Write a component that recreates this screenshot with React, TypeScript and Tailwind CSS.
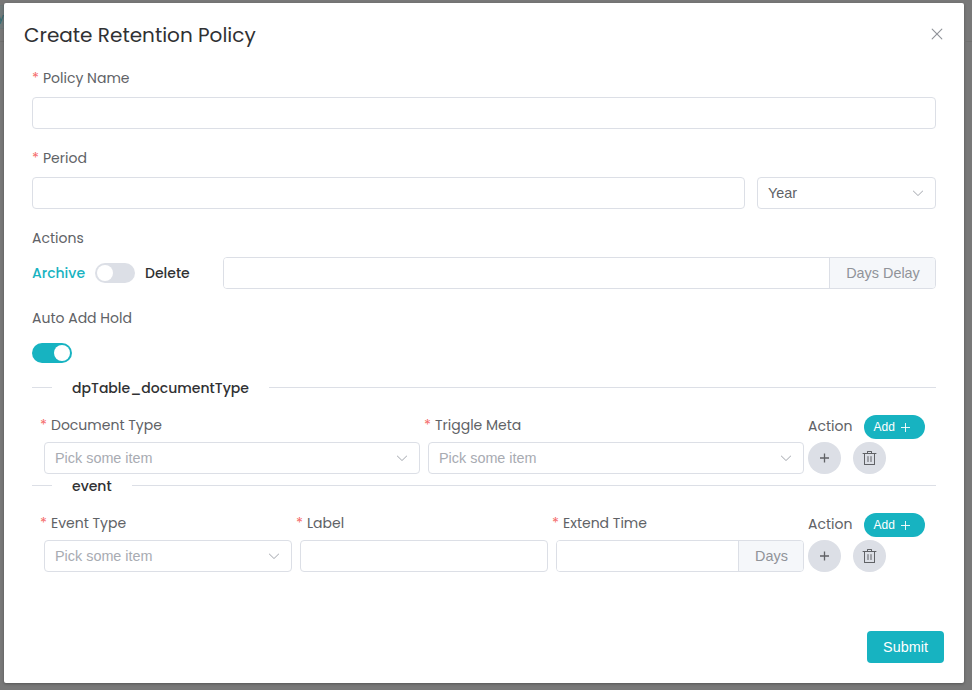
import type { ReactNode } from "react";

const paths = {
  arrowDown:
    "M831.872 340.864 512 652.672 192.128 340.864a30.592 30.592 0 0 0-42.752 0 29.12 29.12 0 0 0 0 41.6L489.664 714.24a32 32 0 0 0 44.672 0l340.288-331.712a29.12 29.12 0 0 0 0-41.728 30.592 30.592 0 0 0-42.752 0z",
  close:
    "M764.288 214.592 512 466.88 259.712 214.592a31.936 31.936 0 0 0-45.12 45.12L466.752 512 214.528 764.224a31.936 31.936 0 1 0 45.12 45.184L512 557.184l252.288 252.288a31.936 31.936 0 0 0 45.12-45.12L557.12 512.064l252.288-252.352a31.936 31.936 0 1 0-45.12-45.184z",
  trash:
    "M160 256H96a32 32 0 0 1 0-64h256V95.936a32 32 0 0 1 32-32h256a32 32 0 0 1 32 32V192h256a32 32 0 1 1 0 64h-64v672a32 32 0 0 1-32 32H192a32 32 0 0 1-32-32zm448-64v-64H416v64zM224 896h576V256H224zm192-128a32 32 0 0 1-32-32V416a32 32 0 0 1 64 0v320a32 32 0 0 1-32 32m192 0a32 32 0 0 1-32-32V416a32 32 0 0 1 64 0v320a32 32 0 0 1-32 32",
};

function Icon({ name, className }: { name: keyof typeof paths; className: string }) {
  return (
    <svg viewBox="0 0 1024 1024" className={className} fill="currentColor">
      <path d={paths[name]} />
    </svg>
  );
}

function Plus({ className, weight }: { className: string; weight: number }) {
  return (
    <svg viewBox="0 0 9 9" className={className} fill="none" stroke="currentColor" strokeWidth={weight}>
      <path d="M0 4.5H9M4.5 0V9" />
    </svg>
  );
}

function Label({ children, required, className = "" }: { children: ReactNode; required?: boolean; className?: string }) {
  return (
    <div className={`flex h-5 items-center whitespace-nowrap text-[14px] leading-5 text-[#606266] ${className}`}>
      {required && <span className="w-[11px] text-[14.4px] text-[#f56c6c]">*</span>}
      <span>{children}</span>
    </div>
  );
}

function Input({ className = "" }: { className?: string }) {
  return <input className={`block h-8 rounded border border-[#dcdfe6] bg-white px-2.5 outline-none ${className}`} />;
}

function Select({ text, muted, className = "" }: { text: string; muted?: boolean; className?: string }) {
  return (
    <div
      className={`flex h-8 items-center justify-between rounded border border-[#dcdfe6] bg-white px-2.5 font-['Liberation_Sans',sans-serif] text-[14.4px] ${muted ? "text-[#a8abb2]" : "text-[#606266]"} ${className}`}
    >
      <span className="leading-5">{text}</span>
      <Icon name="arrowDown" className="size-3.5 text-[#a8abb2]" />
    </div>
  );
}

function InputWithUnit({ unit, className, unitClass }: { unit: string; className: string; unitClass: string }) {
  return (
    <div className={`flex h-8 overflow-hidden rounded border border-[#dcdfe6] ${className}`}>
      <input className="min-w-0 flex-1 bg-white px-2.5 outline-none" />
      <div
        className={`flex items-center justify-center border-l border-[#dcdfe6] bg-[#f5f7fa] pl-px font-['Liberation_Sans',sans-serif] text-[14.4px] leading-5 font-normal text-[#909399] ${unitClass}`}
      >
        {unit}
      </div>
    </div>
  );
}

function Divider({ children }: { children: ReactNode }) {
  return (
    <div className="flex h-5 items-center text-[14px] font-medium text-[#303133]">
      <span className="mb-[2px] h-px w-5 bg-[#dcdfe6]" />
      <span className="px-5 leading-5">{children}</span>
      <span className="mb-[2px] h-px flex-1 bg-[#dcdfe6]" />
    </div>
  );
}

function ActionColumn() {
  return (
    <div className="ml-1 w-[128px]">
      <div className="flex h-6 items-center">
        <Label className="mb-[2px] w-14">Action</Label>
        <button className="flex h-6 w-[61px] items-center rounded-full bg-[#17b3c1] pl-[9.6px] font-['Liberation_Sans',sans-serif] text-[12px] text-white">
          Add
          <Plus className="ml-[6.4px] size-[9px]" weight={0.9} />
        </button>
      </div>
      <div className="mt-[3px] flex gap-3">
        <button className="flex h-8 w-[33px] items-center justify-center rounded-full bg-[#dcdfe6] text-[#606266]">
          <Plus className="h-[10px] w-[9px]" weight={1.3} />
        </button>
        <button className="flex h-8 w-[33px] items-center justify-center rounded-full bg-[#dcdfe6] text-[#606266]">
          <Icon name="trash" className="h-4 w-[17px]" />
        </button>
      </div>
    </div>
  );
}

function Field({ label, children }: { label: string; children: ReactNode }) {
  return (
    <div>
      <Label required className="-ml-[4px] mb-[7px]">
        {label}
      </Label>
      {children}
    </div>
  );
}

export default function App() {
  return (
    <div className="flex h-[690px] w-[972px] overflow-hidden bg-[#787878] font-[Poppins,Inter,sans-serif]">
      <div className="w-1 overflow-hidden">
        <div className="mt-[5px] flex h-6 items-center justify-end border-y border-[#6d7778] bg-[#717a7b] text-[11px] text-[#2b686d]">y</div>
        <div className="mt-3 h-px bg-[#70706f]" />
      </div>
      <main className="mt-[3px] flex h-[680px] w-[960px] flex-col rounded-[2px] bg-white shadow-[0_1px_3px_rgba(0,0,0,0.3)]">
        <header className="flex h-[65px] items-center justify-between pr-[18px] pb-[3px] pl-5">
          <h1 className="pt-[2px] text-[20px] leading-6 text-[#303133]">Create Retention Policy</h1>
          <Icon name="close" className="size-[18px] text-[#909399]" />
        </header>
        <div className="px-7">
          <Label required>Policy Name</Label>
          <Input className="mt-[9px] w-full" />
          <Label required className="mt-[19px]">Period</Label>
          <div className="mt-[9px] flex gap-3">
            <Input className="w-[713px]" />
            <Select text="Year" className="w-[179px]" />
          </div>
          <Label className="mt-[19px]">Actions</Label>
          <div className="mt-[9px] flex items-center text-[14px] font-medium">
            <span className="w-[63px] text-[#17b3c1]">Archive</span>
            <span className="flex h-5 w-10 items-center rounded-full bg-[#dcdfe6] pl-[2px]">
              <span className="size-4 rounded-full bg-white" />
            </span>
            <span className="ml-2.5 w-[78px] text-[#303133]">Delete</span>
            <InputWithUnit unit="Days Delay" className="w-[713px]" unitClass="w-[106px]" />
          </div>
          <Label className="mt-[19px]">Auto Add Hold</Label>
          <span className="mt-[15px] flex h-5 w-10 items-center justify-end rounded-full bg-[#17b3c1] pr-[2px]">
            <span className="size-4 rounded-full bg-white" />
          </span>
          <div className="mt-[15px]">
            <Divider>dpTable_documentType</Divider>
          </div>
          <div className="mt-[17px] flex pl-3">
            <div className="flex gap-2">
              <Field label="Document Type">
                <Select text="Pick some item" muted className="w-[376px]" />
              </Field>
              <Field label="Triggle Meta">
                <Select text="Pick some item" muted className="w-[376px]" />
              </Field>
            </div>
            <ActionColumn />
          </div>
          <div className="mt-[2px]">
            <Divider>event</Divider>
          </div>
          <div className="mt-[17px] flex pl-3">
            <div className="flex gap-2">
              <Field label="Event Type">
                <Select text="Pick some item" muted className="w-[248px]" />
              </Field>
              <Field label="Label">
                <Input className="w-[248px]" />
              </Field>
              <Field label="Extend Time">
                <InputWithUnit unit="Days" className="w-[248px]" unitClass="w-[65px]" />
              </Field>
            </div>
            <ActionColumn />
          </div>
        </div>
        <footer className="mt-auto flex justify-end pr-5 pb-5">
          <button className="flex h-8 w-[77px] items-center justify-center rounded bg-[#17b3c1] font-['Liberation_Sans',sans-serif] text-[14.4px] leading-5 text-white">Submit</button>
        </footer>
      </main>
      <div className="w-2">
        <div className="mt-[41px] h-px bg-[#70706f]" />
      </div>
    </div>
  );
}
